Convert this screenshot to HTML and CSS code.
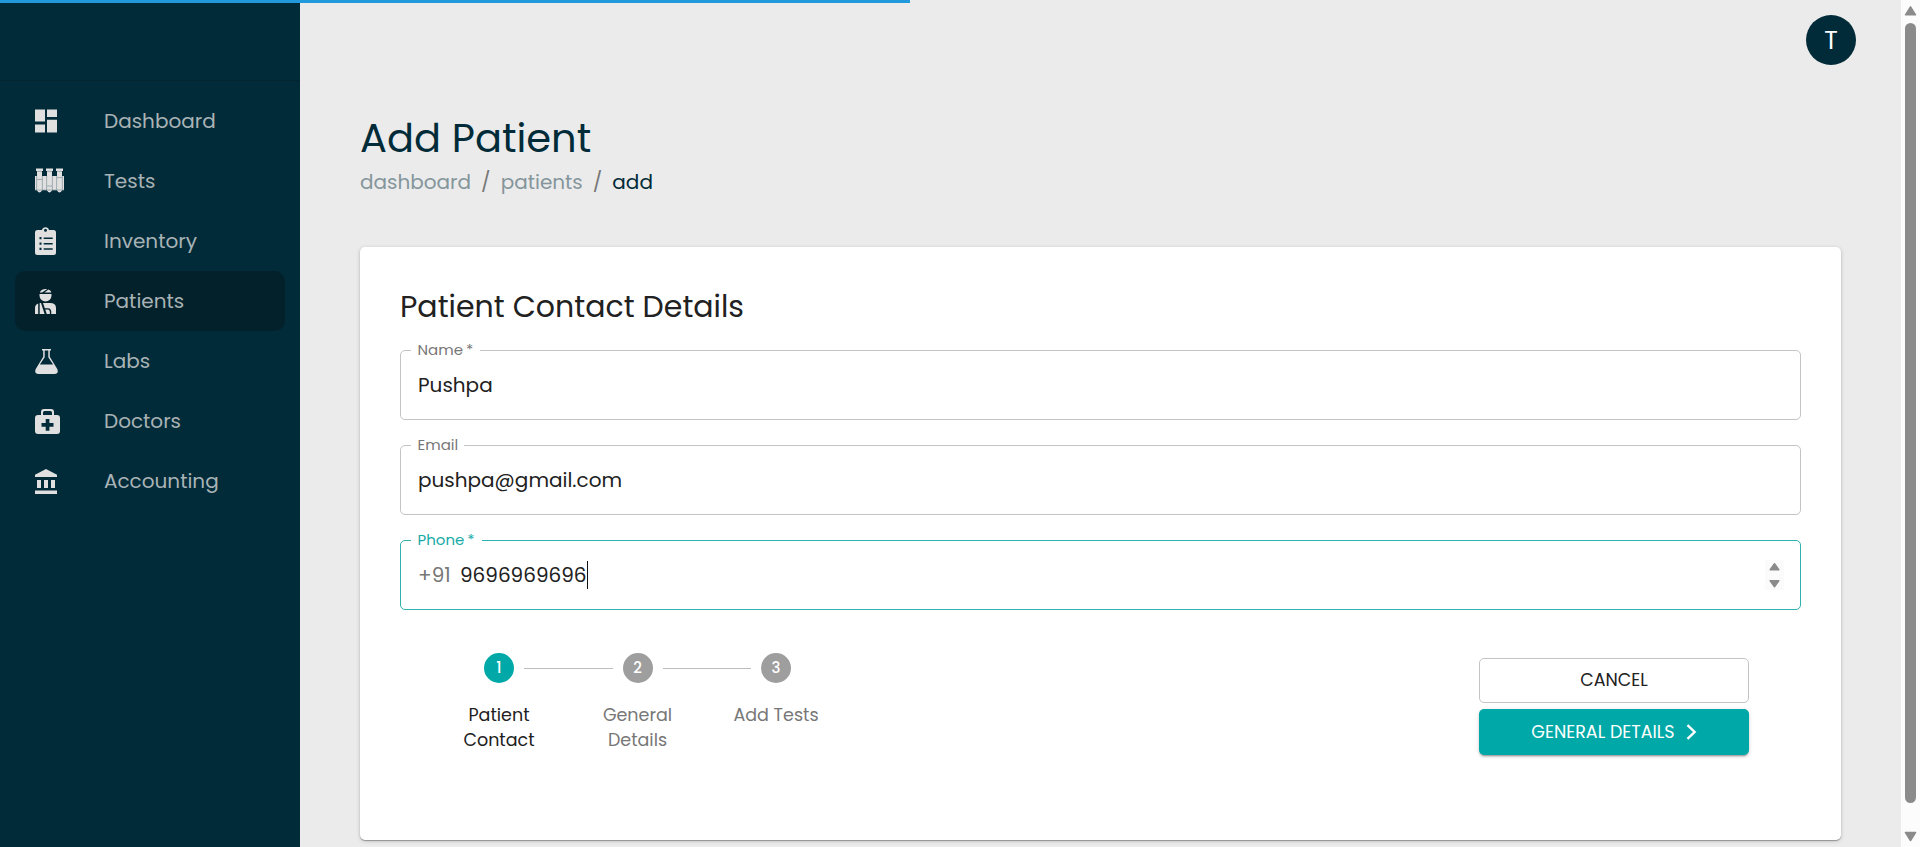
FILE: index.html
```html
<!DOCTYPE html>
<html lang="en">
<head>
<meta charset="utf-8">
<title>Add Patient</title>
<link rel="stylesheet" href="styles.css">
</head>
<body>
<div class="progress"></div>
<nav class="sidebar">
  <a class="nav-item"><svg class="icon" width="30" height="30" viewBox="0 0 30 30"><path d="M0 3.500h10v12H0zM12 3.500h10v7.500H12zM0 18.500h10v8H0zM12 13.700h10v12.800H12z"/></svg><span>Dashboard</span></a>
  <a class="nav-item"><svg class="icon" width="30" height="30" viewBox="0 0 30 30"><path d="M1 2.500h7V5H1zM11 2.500h7V5h-7zM21 2.500h7V5h-7zM0 10h29v14H0z"/><path d="M2 5h5v19.500q-2.500 4-5 0zM12 5h5v19.500q-2.500 4-5 0zM22 5h5v19.500q-2.500 4-5 0z"/><path class="shade" d="M2 5.400h5M12 5.400h5M22 5.400h5M2 13.500h5M12 20h5M22 11.600h5M1.600 10v14M7.400 10v14M11.600 10v14M17.400 10v14M21.600 10v14M27.400 10v14M0 24h29"/></svg><span>Tests</span></a>
  <a class="nav-item"><svg class="icon" width="30" height="30" viewBox="0 0 30 30"><path fill-rule="evenodd" d="M2.500 4H7a3.600 3.600 0 0 1 7 0h4.500a2.500 2.500 0 0 1 2.500 2.500v20a2.500 2.500 0 0 1-2.500 2.500h-16A2.500 2.500 0 0 1 0 26.500v-20A2.500 2.500 0 0 1 2.500 4zM10.500 2.800a1.500 1.500 0 1 0 0 3 1.500 1.500 0 0 0 0-3zM4.500 11h2v2.300h-2zM8.700 11.500h9v1.500h-9zM4.500 16.400h2v2.300h-2zM8.700 16.900h9v1.500h-9zM4.500 21.800h2v2.300h-2zM8.700 22.300h9v1.500h-9z"/></svg><span>Inventory</span></a>
  <a class="nav-item active"><svg class="icon" width="30" height="30" viewBox="0 0 30 30"><path d="M4.800 6.500Q6 3 10.500 3h1.800L7 6.500zM13.500 3.600Q16 4.800 16.400 6.500H9.500zM4.500 8h12v1.500a6 6 0 0 1-12 0z"/><path d="M3.200 17.600V28H0v-6q0-3 3.200-4.400zM4.700 17H6l3.600 11H4.700zM8 17h7q6 0 6 5v6h-4.800q.8-5.800-3.500-5.800H9.800z"/><path d="M10.300 23.600h2.400q2.500 0 2.200 4.400h-3.200z"/></svg><span>Patients</span></a>
  <a class="nav-item"><svg class="icon" width="30" height="30" viewBox="0 0 30 30"><path fill-rule="evenodd" d="M7 3h9v1.500h-1.200v6.200l7.600 12.500q1.500 4.800-2.900 4.800h-16q-4.400 0-2.900-4.800L8.200 10.700V4.500H7zm2.700 1.500v6.700L4.900 18.500h13.200l-4.800-7.300V4.500z"/></svg><span>Labs</span></a>
  <a class="nav-item"><svg class="icon" width="30" height="30" viewBox="0 0 30 30"><path fill-rule="evenodd" d="M6 9V6q0-3 3-3h7q3 0 3 3v3h3q3 0 3 3v13q0 3-3 3H3q-3 0-3-3V12q0-3 3-3zm2 0h9V6.500q0-1.500-1.500-1.500h-6Q8 5 8 6.500zM10.700 13v4H6.500v3.700h4.200v4h3.700v-4h4.100V17h-4.100v-4z"/></svg><span>Doctors</span></a>
  <a class="nav-item"><svg class="icon" width="30" height="30" viewBox="0 0 30 30"><path d="M11 3l11 5.800V11H0V8.800zM2 14h4v8H2zM9 14h4v8H9zM16 14h4v8h-4zM0 24.500h22V28H0z"/></svg><span>Accounting</span></a>
</nav>
<main class="main">
  <header class="topbar"><div class="avatar">T</div></header>
  <h1 class="title">Add Patient</h1>
  <div class="crumbs"><span>dashboard</span><span class="slash">/</span><span>patients</span><span class="slash">/</span><span class="current">add</span></div>
  <section class="card">
    <h2 class="heading">Patient Contact Details</h2>
    <div class="field"><label class="label l-name">Name&thinsp;*</label><span>Pushpa</span></div>
    <div class="field"><label class="label l-email">Email</label><span>pushpa@gmail.com</span></div>
    <div class="field focused"><label class="label l-phone">Phone&thinsp;*</label><span class="prefix">+91</span><span>9696969696</span><i class="caret"></i>
      <svg class="spinner" width="19" height="30" viewBox="0 0 19 30"><path d="M9.500 3.800l4.300 6h-8.600zM5.200 20.700h8.600L9.500 26.700z"/></svg></div>
    <div class="bottom">
      <div class="stepper">
        <div class="step on"><b class="dot">1</b><span>Patient<br>Contact</span></div>
        <i class="line"></i>
        <div class="step"><b class="dot">2</b><span>General<br>Details</span></div>
        <i class="line"></i>
        <div class="step"><b class="dot">3</b><span>Add Tests</span></div>
      </div>
      <div class="buttons">
        <button class="btn cancel">CANCEL</button>
        <button class="btn next"><span>GENERAL DETAILS</span><svg width="11" height="16" viewBox="0 0 11 16"><path d="M1.500 1.200L8.600 8l-7.100 6.800"/></svg></button>
      </div>
    </div>
  </section>
</main>
<aside class="scrollbar"><svg width="19" height="23" viewBox="0 0 19 23"><path d="M9.500 6.800l5 8h-10z"/></svg><div class="thumb"></div><svg width="19" height="44" viewBox="0 0 19 44"><path d="M4.500 29.500h10l-5 8z"/></svg></aside>
</body>
</html>
```
FILE: styles.css
```css
* { box-sizing: border-box; }
body {
  margin: 0;
  height: 847px;
  display: flex;
  overflow: hidden;
  background: #ebebeb;
  font: 400 20px/30px Poppins, Inter, sans-serif;
  color: #212121;
}
svg { display: block; flex: none; }
.progress {
  position: absolute;
  top: 0;
  left: 0;
  width: 909.500px;
  height: 3px;
  background: #2299dd;
}

/* Sidebar */
.sidebar {
  width: 300px;
  flex: none;
  padding: 91px 15px 0;
  background: linear-gradient(#03252f, #03252f) 0 80px / 100% 1px no-repeat #022b39;
}
.nav-item {
  display: flex;
  align-items: center;
  height: 60px;
  padding-left: 20px;
  gap: 39px;
  border-radius: 10px;
  color: #a9b3b6;
}
.nav-item.active { background: #03212b; }
.icon { fill: #e0e0e0; }
.shade { fill: none; stroke: #8d9ea4; stroke-width: .8; }

/* Content */
.main {
  flex: 1;
  padding: 15px 60px 0;
}
.topbar {
  display: flex;
  justify-content: flex-end;
  height: 93px;
  margin-right: -15px;
}
.avatar {
  width: 50px;
  height: 50px;
  border-radius: 50%;
  background: #022b39;
  color: #fff;
  font-size: 25px;
  line-height: 51px;
  text-align: center;
}
.title {
  margin: 0;
  font-size: 40px;
  font-weight: 400;
  line-height: 60px;
  color: #022b39;
}
.crumbs {
  display: flex;
  align-items: center;
  height: 28px;
  color: #84959b;
}
.current { color: #022b39; }
.slash { margin: 0 10px; color: #777; }
.card {
  width: 1481px;
  height: 593px;
  margin-top: 51px;
  padding: 41px 40px 0;
  border-radius: 5px;
  background: #fff;
  box-shadow: 0 1px 1px rgba(0,0,0,.3), 0 1px 4px rgba(0,0,0,.18);
}
.heading {
  margin: 0 0 24px;
  font-size: 30px;
  font-weight: 400;
  line-height: 38px;
}
.field {
  position: relative;
  display: flex;
  align-items: center;
  height: 70px;
  margin-bottom: 25px;
  padding: 0 16px 0 17px;
  border: 1px solid #c4c4c4;
  border-radius: 5px;
}
.field.focused { border-color: #2fb1ae; }
.label {
  position: absolute;
  top: -11px;
  left: 10px;
  padding-left: 6.500px;
  background: #fff;
  color: #777;
  font-size: 15px;
  line-height: 20px;
  white-space: nowrap;
}
.l-name { width: 69px; }
.l-email { width: 53px; }
.l-phone { width: 71px; }
.focused .label { color: #17aaa7; }
.prefix { width: 42px; color: #777; }
.caret { width: 1px; height: 28px; background: #111; }
.spinner {
  margin-left: auto;
  background: #fbfbfb;
  fill: #8b8b8b;
  stroke: #8b8b8b;
  stroke-width: 1.500;
  stroke-linejoin: round;
}

/* Stepper and actions */
.bottom {
  display: flex;
  justify-content: space-between;
  padding: 18px 52px 0 30px;
}
.stepper {
  display: flex;
  align-items: flex-start;
}
.step {
  display: flex;
  flex-direction: column;
  align-items: center;
  width: 138px;
  margin-right: -89px;
  gap: 20px;
  text-align: center;
  color: #777;
  font-size: 17.500px;
  line-height: 25px;
}
.step.on { color: #212121; }
.dot {
  width: 30px;
  height: 30px;
  border-radius: 50%;
  background: #9e9e9e;
  color: #fff;
  font-size: 15px;
  font-weight: 500;
  line-height: 30px;
}
.on .dot { background: #00a9a7; }
.line {
  width: 88.500px;
  height: 1px;
  margin: 15px 0 0 45px;
  background: #bdbdbd;
}
.line + .step { margin-left: -44px; }
.buttons {
  display: flex;
  flex-direction: column;
  gap: 6px;
  width: 270px;
  padding-top: 5px;
}
.btn {
  display: flex;
  align-items: center;
  justify-content: center;
  border: 0;
  border-radius: 5px;
  background: #fff;
  font: 400 17.500px/28px Poppins, Inter, sans-serif;
}
.cancel {
  height: 45px;
  padding-bottom: 2px;
  border: 1px solid #c4c4c4;
  color: #212121;
}
.next {
  height: 46px;
  gap: 11px;
  background: #00a9a7;
  color: #fff;
  box-shadow: 0 3px 1px -2px rgba(0,0,0,.2), 0 2px 2px rgba(0,0,0,.14), 0 1px 5px rgba(0,0,0,.12);
}
.next svg { fill: none; stroke: #fff; stroke-width: 2.400; }

/* Page scrollbar */
.scrollbar {
  display: flex;
  flex-direction: column;
  align-items: center;
  width: 19px;
  flex: none;
  background: #fcfcfc;
}
.scrollbar svg { fill: #8b8b8b; stroke: #8b8b8b; stroke-width: 1.500; stroke-linejoin: round; }
.thumb {
  flex: 1;
  width: 11px;
  border-radius: 6px;
  background: #8b8b8b;
}
```
